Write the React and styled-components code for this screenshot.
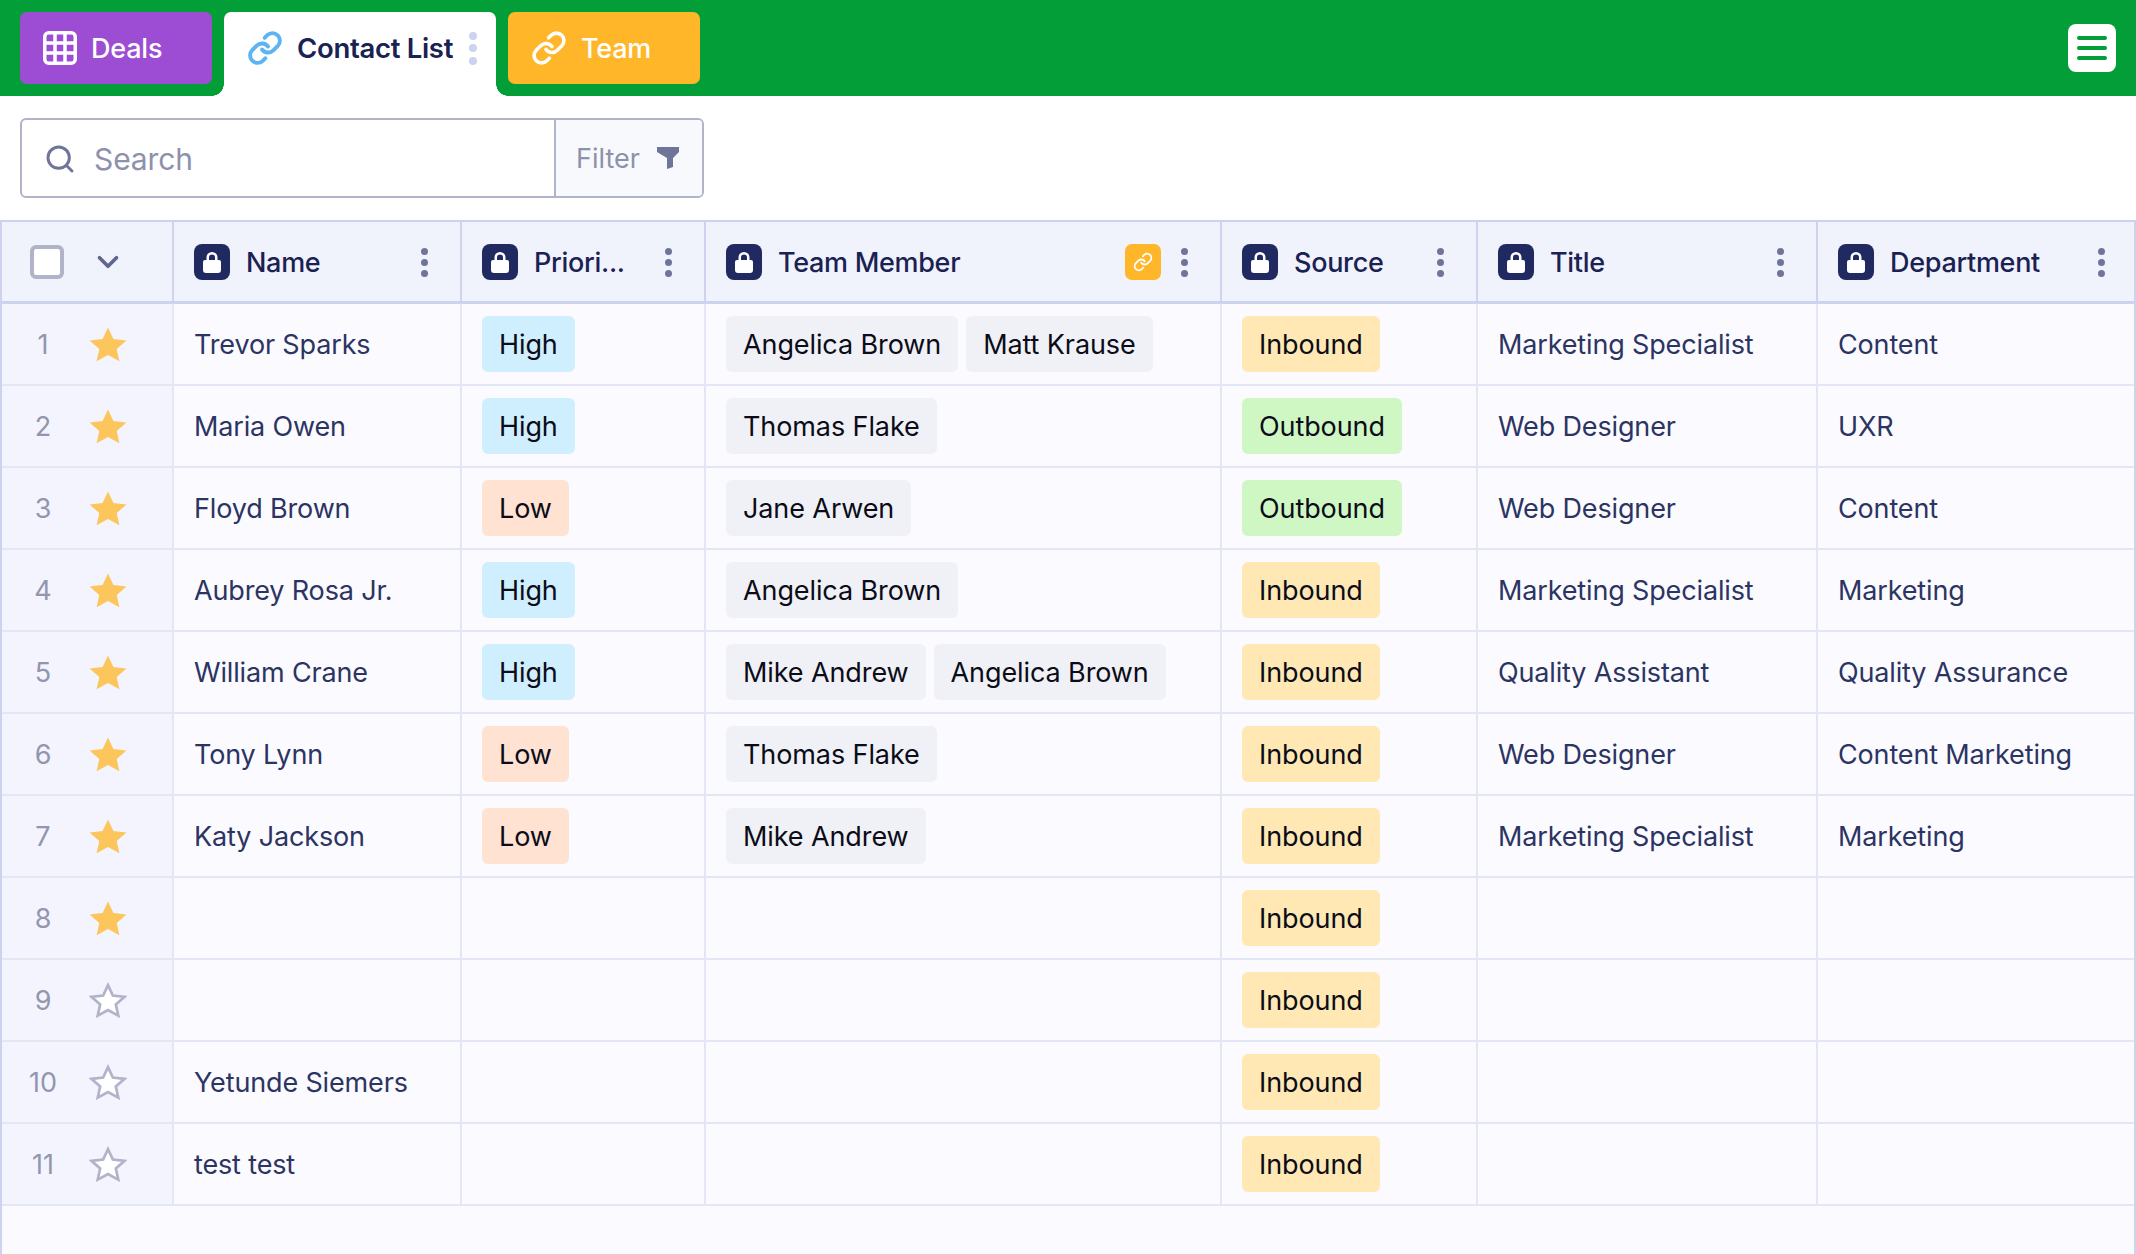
import React from 'react'
import styled,{createGlobalStyle} from 'styled-components'
import {Link,Search,ChevronDown} from 'lucide-react'

const GlobalStyle=createGlobalStyle`
  html,body{margin:0;padding:0;background:#fafaff;}
  body{font-family:"Inter","Liberation Sans",sans-serif;}
`
const COLS='172px 288px 244px 516px 256px 340px 1fr'

const Page=styled.div`
  width:2136px;
  height:1254px;
  overflow:hidden;
  display:flex;
  flex-direction:column;
  background:#fff;
`
const TopBar=styled.div`
  height:96px;
  flex:none;
  box-sizing:border-box;
  padding:12px 20px 0;
  background:#049e38;
  display:flex;
  align-items:flex-start;
  gap:12px;
`
const Tab=styled.div`
  width:192px;
  height:72px;
  box-sizing:border-box;
  padding-left:23px;
  border-radius:7px;
  background:${p=>p.$bg};
  color:#fff;
  font-size:27px;
  font-weight:500;
  letter-spacing:-.2px;
  display:flex;
  align-items:center;
  gap:14px;
`
const ActiveTab=styled.div`
  position:relative;
  width:272px;
  height:84px;
  box-sizing:border-box;
  padding:0 19px 12px 23px;
  border-radius:7px 7px 0 0;
  background:#fff;
  color:#1a2153;
  font-size:27.5px;
  font-weight:600;
  letter-spacing:-.3px;
  display:flex;
  align-items:center;
  gap:14px;
  white-space:nowrap;
  &::before,&::after{
    content:'';
    position:absolute;
    bottom:0;
    width:12px;
    height:12px;
  }
  &::before{left:-12px;background:radial-gradient(circle at 0 0,#049e38 11.5px,#fff 12px);}
  &::after{right:-12px;background:radial-gradient(circle at 100% 0,#049e38 11.5px,#fff 12px);}
`
const MenuButton=styled.div`
  margin:12px 0 0 auto;
  width:48px;
  height:48px;
  border-radius:8px;
  background:#fff;
  display:flex;
  flex-direction:column;
  align-items:center;
  justify-content:center;
  gap:6.5px;
  span{width:30px;height:3.5px;border-radius:2px;background:#049e38;}
`
const Toolbar=styled.div`
  height:124px;
  flex:none;
  box-sizing:border-box;
  padding:22px 20px 0;
`
const SearchBox=styled.div`
  width:684px;
  height:80px;
  box-sizing:border-box;
  border:2px solid #b1b4c9;
  border-radius:6px;
  display:flex;
  overflow:hidden;
`
const SearchField=styled.div`
  flex:1;
  display:flex;
  align-items:center;
  padding:2px 0 0 22px;
  gap:18px;
  color:#8d91ab;
  font-size:30px;
  letter-spacing:-.1px;
`
const FilterButton=styled.div`
  width:148px;
  border-left:2px solid #b1b4c9;
  background:#f8f9fd;
  display:flex;
  align-items:center;
  box-sizing:border-box;
  padding-left:20px;
  gap:17px;
  color:#8d91ab;
  font-size:27px;
`
const Table=styled.div`
  flex:1;
  background:#fafaff;
  border-left:2px solid #cdd2ee;
  border-right:2px solid #cdd2ee;
`
const HeadRow=styled.div`
  display:grid;
  grid-template-columns:${COLS};
  height:84px;
  box-sizing:border-box;
  border-top:2px solid #cdd2ee;
  border-bottom:3px solid #cdd2ee;
  background:#f1f3fc;
`
const HeadCell=styled.div`
  display:flex;
  align-items:center;
  box-sizing:border-box;
  padding:1px ${p=>p.$last?29:32}px 0 20px;
  gap:16px;
  border-right:${p=>p.$last?'none':'2px solid #cdd2ee'};
  color:#1a2153;
  font-size:27px;
  font-weight:550;
  letter-spacing:-.3px;
  min-width:0;
`
const HeadLabel=styled.span`
  flex:1;
  white-space:nowrap;
`
const SelectCell=styled(HeadCell)`
  padding:0 0 0 28px;
  gap:0;
`
const CheckBox=styled.div`
  width:34px;
  height:34px;
  box-sizing:border-box;
  border:4px solid #b1b4c9;
  border-radius:6px;
  background:#fff;
`
const ChevronWrap=styled.div`
  margin-left:27px;
  color:#60678f;
  display:flex;
`
const Kebab=styled.div`
  flex:none;
  display:flex;
  flex-direction:column;
  gap:${p=>p.$large?4.5:4}px;
  span{
    width:${p=>p.$large?8:7}px;
    height:${p=>p.$large?8:7}px;
    border-radius:50%;
    background:${p=>p.$large?'#cdd2ee':'#6f7499'};
  }
`
const LockBadge=styled.div`
  flex:none;
  width:36px;
  height:36px;
  border-radius:8px;
  background:#202a60;
  display:flex;
  align-items:center;
  justify-content:center;
`
const LinkBadge=styled.div`
  flex:none;
  width:36px;
  height:36px;
  margin-right:4px;
  border-radius:7px;
  background:#ffb629;
  color:#fff;
  display:flex;
  align-items:center;
  justify-content:center;
`
const Row=styled.div`
  display:grid;
  grid-template-columns:${COLS};
  height:82px;
  box-sizing:border-box;
  border-bottom:2px solid #e3e6f5;
`
const IndexCell=styled.div`
  display:grid;
  grid-template-columns:42px 1fr;
  align-items:center;
  padding-left:20px;
  box-sizing:border-box;
  background:#f3f4fd;
  border-right:2px solid #e3e6f5;
  color:#9296ae;
  font-size:27px;
  text-align:center;
`
const StarWrap=styled.div`
  display:flex;
  margin-left:25px;
`
const Cell=styled.div`
  display:flex;
  align-items:center;
  box-sizing:border-box;
  padding:0 20px;
  gap:8px;
  border-right:${p=>p.$last?'none':'2px solid #e3e6f5'};
  color:#2c3462;
  font-size:27px;
  letter-spacing:-.15px;
  white-space:nowrap;
`
const Pill=styled.span`
  height:56px;
  display:inline-flex;
  align-items:center;
  padding:0 17px;
  border-radius:6px;
  background:${p=>p.$bg};
  color:#0b0c18;
  font-size:27px;
  letter-spacing:-.1px;
`

const PILL_BG={
  High:'#cfefff',
  Low:'#ffe2d2',
  Inbound:'#ffe8b3',
  Outbound:'#cff7c3',
}
const MEMBER_BG='#f0f1f6'

const rows=[
  {name:'Trevor Sparks',priority:'High',team:['Angelica Brown','Matt Krause'],source:'Inbound',title:'Marketing Specialist',dept:'Content',star:true},
  {name:'Maria Owen',priority:'High',team:['Thomas Flake'],source:'Outbound',title:'Web Designer',dept:'UXR',star:true},
  {name:'Floyd Brown',priority:'Low',team:['Jane Arwen'],source:'Outbound',title:'Web Designer',dept:'Content',star:true},
  {name:'Aubrey Rosa Jr.',priority:'High',team:['Angelica Brown'],source:'Inbound',title:'Marketing Specialist',dept:'Marketing',star:true},
  {name:'William Crane',priority:'High',team:['Mike Andrew','Angelica Brown'],source:'Inbound',title:'Quality Assistant',dept:'Quality Assurance',star:true},
  {name:'Tony Lynn',priority:'Low',team:['Thomas Flake'],source:'Inbound',title:'Web Designer',dept:'Content Marketing',star:true},
  {name:'Katy Jackson',priority:'Low',team:['Mike Andrew'],source:'Inbound',title:'Marketing Specialist',dept:'Marketing',star:true},
  {source:'Inbound',star:true},
  {source:'Inbound'},
  {name:'Yetunde Siemers',source:'Inbound'},
  {name:'test test',source:'Inbound'},
]

const Dots=(props)=>(
  <Kebab {...props}><span/><span/><span/></Kebab>
)

const LockIcon=()=>(
  <svg width="18" height="22" viewBox="0 0 18 22">
    <path fill="#fff" d="M3.5 9V6.5a5.5 5.5 0 0 1 11 0V9H16a2 2 0 0 1 2 2v8a3 3 0 0 1-3 3H3a3 3 0 0 1-3-3v-8a2 2 0 0 1 2-2zM6 9h6V6.5a3 3 0 0 0-6 0z"/>
  </svg>
)

const GridIcon=()=>(
  <svg width="34" height="34" viewBox="0 0 34 34">
    <rect x="1.75" y="1.75" width="30.5" height="30.5" rx="4" fill="none" stroke="#fff" strokeWidth="3.5"/>
    <path d="M12 2v30M22 2v30M2 12h30M2 22h30" stroke="#fff" strokeWidth="3.5"/>
  </svg>
)

const FunnelIcon=()=>(
  <svg width="22" height="22" viewBox="0 0 22 22">
    <path fill="#6f7499" d="M0 0h22v5l-6 6v9l-6 2V11L0 5z"/>
  </svg>
)

const StarIcon=({filled})=>(
  <svg width="38" height="36" viewBox="0 0 38 36">
    <path
      d="M19 1.5l5.4 11.6 13 1.4-9.7 8.5 2.7 12.3L19 29.1 7.6 35.3l2.7-12.3L.6 14.5l13-1.4z"
      fill={filled?'#fcc65c':'#fff'}
      stroke={filled?'none':'#b1b4c9'}
      strokeWidth={filled?0:3}
      transform={filled?undefined:'translate(1.9 1.8) scale(.9)'}
    />
  </svg>
)

const Head=({label,badge,last})=>(
  <HeadCell $last={last}>
    <LockBadge><LockIcon/></LockBadge>
    <HeadLabel>{label}</HeadLabel>
    {badge&&<LinkBadge><Link size={20} strokeWidth={2.2}/></LinkBadge>}
    <Dots/>
  </HeadCell>
)

const App=()=>{
  return(
    <Page>
      <GlobalStyle/>
      <TopBar>
        <Tab $bg="#9c4dd3"><GridIcon/>Deals</Tab>
        <ActiveTab>
          <Link size={36} color="#5cb5f2" strokeWidth={2.6}/>
          <HeadLabel>Contact List</HeadLabel>
          <Dots $large/>
        </ActiveTab>
        <Tab $bg="#ffb629"><Link size={36} strokeWidth={2.4}/>Team</Tab>
        <MenuButton><span/><span/><span/></MenuButton>
      </TopBar>
      <Toolbar>
        <SearchBox>
          <SearchField><Search size={32} color="#6f7499" strokeWidth={2.2}/>Search</SearchField>
          <FilterButton>Filter<FunnelIcon/></FilterButton>
        </SearchBox>
      </Toolbar>
      <Table>
        <HeadRow>
          <SelectCell>
            <CheckBox/>
            <ChevronWrap><ChevronDown size={34} strokeWidth={2.6}/></ChevronWrap>
          </SelectCell>
          <Head label="Name"/>
          <Head label="Priori..."/>
          <Head label="Team Member" badge/>
          <Head label="Source"/>
          <Head label="Title"/>
          <Head label="Department" last/>
        </HeadRow>
        {rows.map((r,i)=>(
          <Row key={i}>
            <IndexCell>
              <span>{i+1}</span>
              <StarWrap><StarIcon filled={r.star}/></StarWrap>
            </IndexCell>
            <Cell>{r.name}</Cell>
            <Cell>{r.priority&&<Pill $bg={PILL_BG[r.priority]}>{r.priority}</Pill>}</Cell>
            <Cell>{r.team&&r.team.map(m=><Pill key={m} $bg={MEMBER_BG}>{m}</Pill>)}</Cell>
            <Cell><Pill $bg={PILL_BG[r.source]}>{r.source}</Pill></Cell>
            <Cell>{r.title}</Cell>
            <Cell $last>{r.dept}</Cell>
          </Row>
        ))}
      </Table>
    </Page>
  )
}

export default App
